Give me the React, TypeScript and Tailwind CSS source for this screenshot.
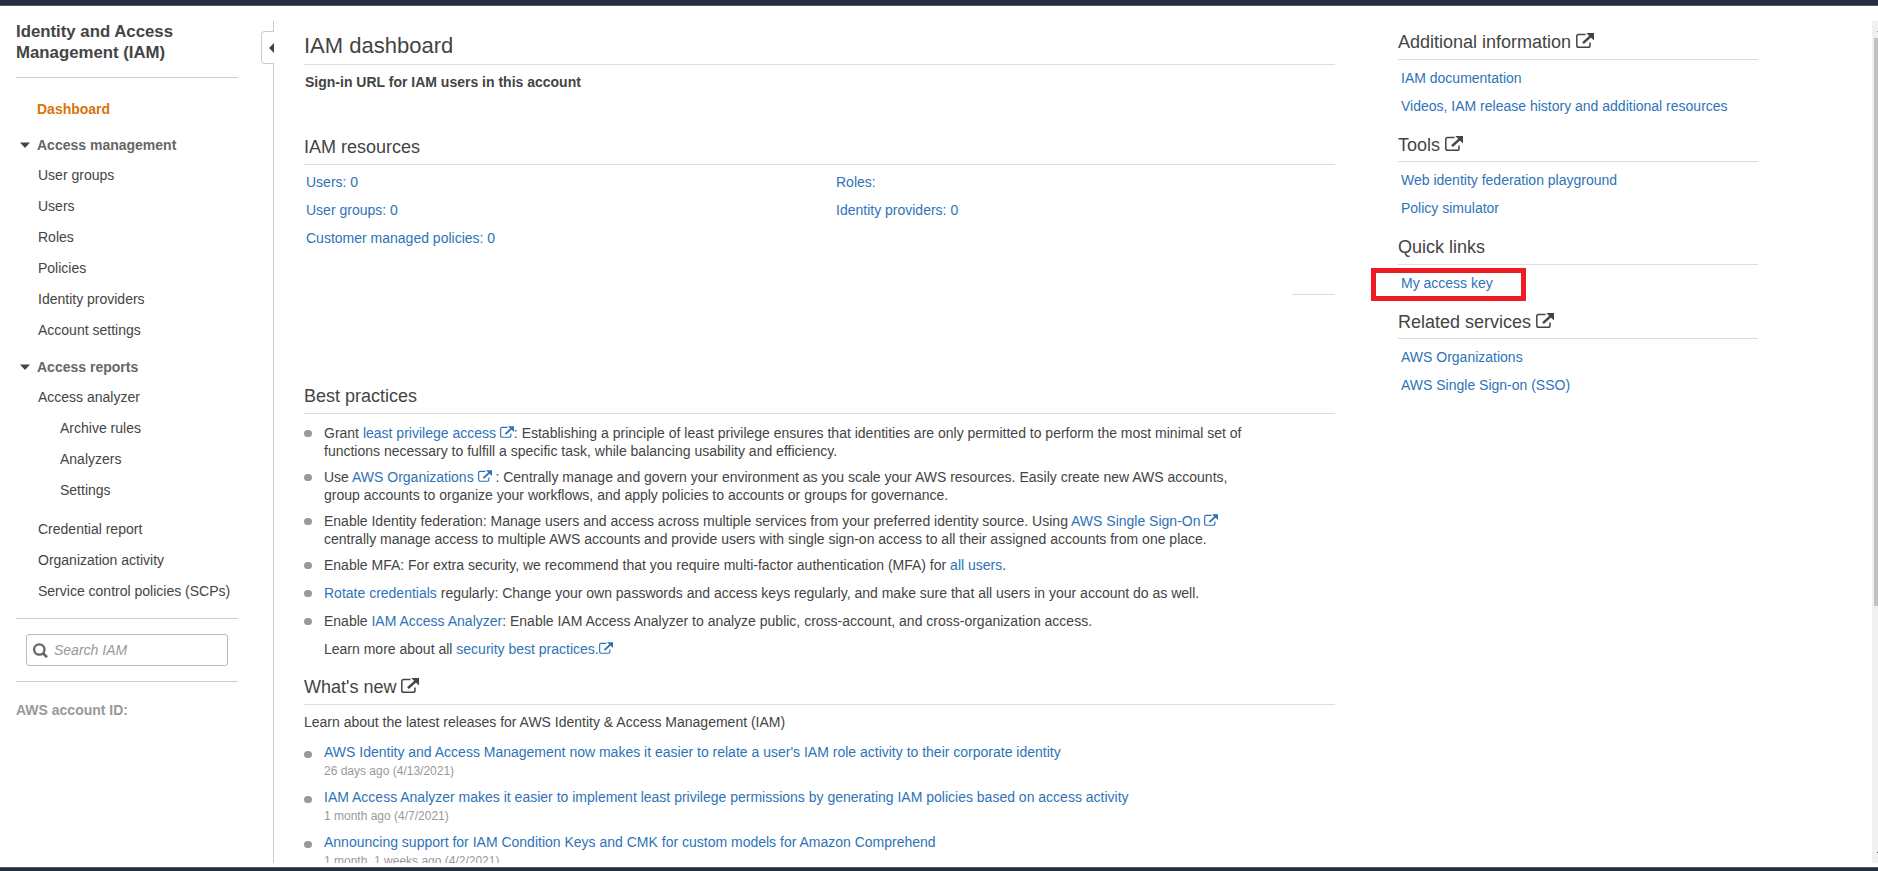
import React from "react";

function Ext({ big = false, className = "" }: { big?: boolean; className?: string }) {
  return (
    <svg
      viewBox="0 0 18 15"
      className={`${big ? "h-[15px] w-[18px]" : "h-[12px] w-[14px]"} inline-block align-baseline ${className}`}
      fill="none"
      stroke="currentColor"
    >
      <path d="M9.5 1.6H2.6Q.8 1.6 .8 3.4V12.4Q.8 14.2 2.6 14.2H12.2Q14 14.2 14 12.4V9.5" strokeWidth="1.5" />
      <path d="M7 10.2L15 2.8" strokeWidth="2.5" />
      <path d="M10.2 0H18V7.4Z" fill="currentColor" stroke="none" />
    </svg>
  );
}

function A({ children }: { children: React.ReactNode }) {
  return <a className="text-[#2e73b8]">{children}</a>;
}

function NavItem({ children, sub = false }: { children: React.ReactNode; sub?: boolean }) {
  return <li className={`h-[31px] leading-[31px] ${sub ? "pl-[22px]" : ""}`}>{children}</li>;
}

function NavHead({ children }: { children: React.ReactNode }) {
  return (
    <div className="flex h-[30px] items-center pl-[4px] font-bold text-[#666]">
      <svg viewBox="0 0 10 6" className="mr-[7px] h-[6px] w-[10px]">
        <path d="M0 .5H10L5 6Z" fill="#444" />
      </svg>
      {children}
    </div>
  );
}

function H2({ children, ext = false, low = false }: { children: React.ReactNode; ext?: boolean; low?: boolean }) {
  return (
    <h2 className={`h-[30px] border-b border-[#ddd] text-[18px] leading-[24px] ${low ? "pt-px" : ""}`}>
      {children}
      {ext && <Ext big className="ml-[5px]" />}
    </h2>
  );
}

function Bullet({ children, low = false }: { children: React.ReactNode; low?: boolean }) {
  return (
    <li className="flex">
      <span className={`mr-[12px] h-[7px] w-[8px] shrink-0 rounded-full bg-[#999] ${low ? "mt-[8px]" : "mt-[6px]"}`} />
      <div>{children}</div>
    </li>
  );
}

function News({ title, date }: { title: string; date: string }) {
  return (
    <Bullet low>
      <p className="h-[20px]"><A>{title}</A></p>
      <p className="h-[25px] text-[12px] leading-[16px] text-[#999]">{date}</p>
    </Bullet>
  );
}

function Panel({ title, ext = false, low = false, links }: { title: string; ext?: boolean; low?: boolean; links: string[] }) {
  return (
    <section>
      <H2 ext={ext} low={low}>{title}</H2>
      <ul className="pl-[3px] pt-[4px]">
        {links.map((l) => (
          <li key={l} className="h-[28px] leading-[28px]"><A>{l}</A></li>
        ))}
      </ul>
    </section>
  );
}

export default function App() {
  return (
    <div className="flex h-[871px] w-[1878px] flex-col overflow-hidden bg-white font-['Liberation_Sans',Arial,sans-serif] text-[14px] leading-[18px] text-[#444]">
      <div className="h-[6px] shrink-0 border-b border-[#545b64] bg-[#232f3e]" />
      <div className="flex h-[857px] shrink-0 pt-[15px]">
        <aside className="w-[273px] shrink-0 pl-4">
          <div className="w-[222px]">
            <h1 className="h-[57px] border-b border-[#ccc] text-[16.8px] font-bold leading-[21px]">
              Identity and Access<br />Management (IAM)
            </h1>
            <p className="mt-[22px] pl-[21px] font-bold leading-[18px] text-[#d9730d]">Dashboard</p>
            <div className="mt-[12px]"><NavHead>Access management</NavHead></div>
            <ul className="pl-[22px]">
              <NavItem>User groups</NavItem>
              <NavItem>Users</NavItem>
              <NavItem>Roles</NavItem>
              <NavItem>Policies</NavItem>
              <NavItem>Identity providers</NavItem>
              <NavItem>Account settings</NavItem>
            </ul>
            <div className="mt-[6px]"><NavHead>Access reports</NavHead></div>
            <ul className="pl-[22px]">
              <NavItem>Access analyzer</NavItem>
              <NavItem sub>Archive rules</NavItem>
              <NavItem sub>Analyzers</NavItem>
              <NavItem sub>Settings</NavItem>
            </ul>
            <ul className="mt-[8px] whitespace-nowrap pl-[22px]">
              <NavItem>Credential report</NavItem>
              <NavItem>Organization activity</NavItem>
              <NavItem>Service control policies (SCPs)</NavItem>
            </ul>
            <div className="mt-[11px] border-y border-[#ccc] py-[15px] pl-[10px]">
              <div className="flex h-[32px] w-[202px] items-center rounded-[3px] border border-[#bbb] pl-[6px] italic text-[#999]">
                <svg viewBox="0 0 15 15" className="mr-[6px] h-[15px] w-[15px]" fill="none" stroke="#666">
                  <circle cx="6.3" cy="6.5" r="5.2" strokeWidth="2.3" />
                  <path d="M10 10.2L14 14.2" strokeWidth="2.7" />
                </svg>
                Search IAM
              </div>
            </div>
            <p className="mt-[19px] font-bold text-[#999]">AWS account ID:</p>
          </div>
        </aside>

        <div className="relative w-px shrink-0 bg-[#ccc]">
          <div className="absolute right-0 top-[10px] flex h-[33px] w-[13px] items-center justify-end rounded-l-[4px] border border-r-0 border-[#ccc] bg-white">
            <svg viewBox="0 0 5 10" className="h-[10px] w-[5px]">
              <path d="M5 0V10L0 5Z" fill="#444" />
            </svg>
          </div>
        </div>

        <main className="ml-[30px] h-[842px] w-[1031px] shrink-0 overflow-hidden">
          <h1 className="h-[44px] border-b border-[#ddd] pt-[11px] text-[22px] leading-[28px]">IAM dashboard</h1>
          <p className="mt-[8px] pl-px font-bold">Sign-in URL for IAM users in this account</p>
          <div className="mt-[44px]"><H2>IAM resources</H2></div>
          <div className="grid grid-cols-[530px_1fr] pl-[2px] pt-[3px] leading-[28px]">
            <A>Users: 0</A>
            <A>Roles:</A>
            <A>User groups: 0</A>
            <A>Identity providers: 0</A>
            <A>Customer managed policies: 0</A>
          </div>
          <div className="ml-auto mt-[42px] w-[43px] border-b border-[#ddd]" />
          <div className="mt-[89px]"><H2>Best practices</H2></div>
          <ul className="mt-[10px] flex w-[960px] flex-col gap-[8px] whitespace-nowrap">
            <Bullet>
              Grant <A>least privilege access <Ext /></A>: Establishing a principle of least privilege ensures that identities are only permitted to perform the most minimal set of<br />
              functions necessary to fulfill a specific task, while balancing usability and efficiency.
            </Bullet>
            <Bullet>
              Use <A>AWS Organizations <Ext /></A> : Centrally manage and govern your environment as you scale your AWS resources. Easily create new AWS accounts,<br />
              group accounts to organize your workflows, and apply policies to accounts or groups for governance.
            </Bullet>
            <Bullet>
              Enable Identity federation: Manage users and access across multiple services from your preferred identity source. Using <A>AWS Single Sign-On <Ext /></A><br />
              centrally manage access to multiple AWS accounts and provide users with single sign-on access to all their assigned accounts from one place.
            </Bullet>
            <Bullet>
              Enable MFA: For extra security, we recommend that you require multi-factor authentication (MFA) for <A>all users</A>.
            </Bullet>
          </ul>
          <ul className="mt-[10px] flex flex-col gap-[10px]">
            <Bullet>
              <A>Rotate credentials</A> regularly: Change your own passwords and access keys regularly, and make sure that all users in your account do as well.
            </Bullet>
            <Bullet>
              Enable <A>IAM Access Analyzer</A>: Enable IAM Access Analyzer to analyze public, cross-account, and cross-organization access.
            </Bullet>
            <li className="pl-[20px]">Learn more about all <A>security best practices.<Ext /></A></li>
          </ul>
          <div className="mt-[17px]"><H2 ext>What's new</H2></div>
          <p className="mt-[8px]">Learn about the latest releases for AWS Identity &amp; Access Management (IAM)</p>
          <ul className="mt-[12px]">
            <News title="AWS Identity and Access Management now makes it easier to relate a user's IAM role activity to their corporate identity" date="26 days ago (4/13/2021)" />
            <News title="IAM Access Analyzer makes it easier to implement least privilege permissions by generating IAM policies based on access activity" date="1 month ago (4/7/2021)" />
            <News title="Announcing support for IAM Condition Keys and CMK for custom models for Amazon Comprehend" date="1 month, 1 weeks ago (4/2/2021)" />
          </ul>
        </main>

        <div className="ml-[63px] flex w-[360px] shrink-0 flex-col gap-[12px] pt-[9px]">
          <Panel title="Additional information" ext links={["IAM documentation", "Videos, IAM release history and additional resources"]} />
          <Panel title="Tools" ext low links={["Web identity federation playground", "Policy simulator"]} />
          <div className="relative mt-px">
            <Panel title="Quick links" links={["My access key"]} />
            <div className="absolute -left-[27px] top-[33px] h-[33px] w-[155px] border-[5px] border-[#ed1c24]" />
          </div>
          <Panel title="Related services" ext low links={["AWS Organizations", "AWS Single Sign-on (SSO)"]} />
        </div>

        <div className="ml-auto flex h-[842px] w-[6px] shrink-0 flex-col items-end bg-[#f1f1f1] pt-[10px]">
          <div className="h-px w-px bg-[#a3a3a3]" />
          <div className="mt-[6px] h-[568px] w-[4px] bg-[#c1c1c1]" />
          <div className="mb-[10px] mt-auto h-px w-px bg-[#505050]" />
        </div>
      </div>
      <div className="mt-[4px] h-[4px] shrink-0 border-t border-[#545b64] bg-[#232f3e]" />
    </div>
  );
}
